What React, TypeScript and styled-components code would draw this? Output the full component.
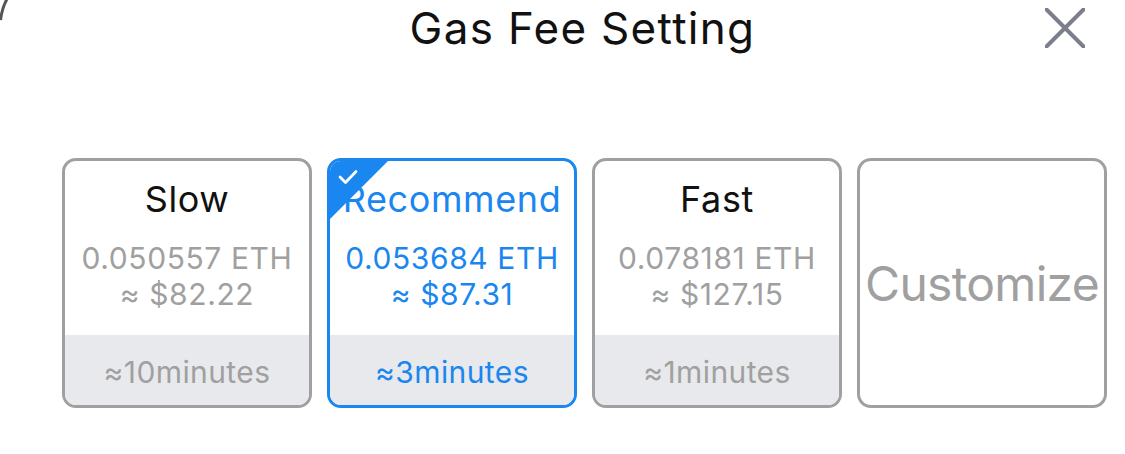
import React from "react";
import styled, { createGlobalStyle } from "styled-components";

const Global = createGlobalStyle`
  html, body { margin: 0; padding: 0; background: #ffffff; }
  body { font-family: Inter, "Noto Sans", "Liberation Sans", sans-serif; -webkit-font-smoothing: antialiased; }
`;

const Page = styled.div`
  position: relative;
  width: 1125px;
  height: 454px;
  overflow: hidden;
  background: #ffffff;
`;

const CornerArc = styled.svg`
  position: absolute;
  left: 0;
  top: 0;
`;

const Header = styled.header`
  display: grid;
  grid-template-columns: 1fr auto 1fr;
  align-items: center;
  height: 56px;
  padding: 0 40px 0 80px;
`;

const Title = styled.h1`
  grid-column: 2;
  margin: 0;
  font-size: 44px;
  font-weight: 400;
  color: #111111;
  letter-spacing: 1.3px;
  line-height: 56px;
`;

const Close = styled.button`
  grid-column: 3;
  justify-self: end;
  display: flex;
  align-items: center;
  justify-content: center;
  width: 40px;
  height: 40px;
  padding: 0;
  border: none;
  background: transparent;
`;

const Row = styled.div`
  display: flex;
  gap: 15px;
  padding-left: 62px;
  margin-top: 102px;
`;

const Card = styled.div<{ $active?: boolean }>`
  position: relative;
  box-sizing: border-box;
  width: 250px;
  height: 250px;
  border: 3px solid ${(p) => (p.$active ? "#1a86f0" : "#a0a0a0")};
  border-radius: 14px;
  overflow: hidden;
  display: flex;
  flex-direction: column;
  background: #ffffff;
`;

const Body = styled.div`
  flex: 1;
  display: flex;
  flex-direction: column;
  align-items: center;
  padding-top: 15.5px;
`;

const Name = styled.div<{ $active?: boolean }>`
  font-size: 36px;
  line-height: 44px;
  letter-spacing: 0.6px;
  color: ${(p) => (p.$active ? "#1a86f0" : "#111111")};
`;

const Values = styled.div`
  display: flex;
  flex-direction: column;
  align-items: center;
  margin-top: 19px;
`;

const Value = styled.div<{ $active?: boolean }>`
  font-size: 30px;
  line-height: 36px;
  letter-spacing: 0.6px;
  color: ${(p) => (p.$active ? "#1a86f0" : "#a0a0a0")};
  white-space: nowrap;
`;

const Footer = styled.div<{ $active?: boolean }>`
  height: 70px;
  background: #e8e9ec;
  display: flex;
  align-items: center;
  justify-content: center;
  padding-top: 4px;
  box-sizing: border-box;
  font-size: 30px;
  letter-spacing: 0.4px;
  color: ${(p) => (p.$active ? "#1a86f0" : "#a0a0a0")};
`;

const CustomCard = styled(Card)`
  align-items: center;
  justify-content: center;
`;

const CustomLabel = styled.div`
  font-size: 48px;
  color: #a0a0a0;
  letter-spacing: -0.7px;
`;

const Corner = styled.div`
  position: absolute;
  left: 0;
  top: 0;
  width: 58px;
  height: 58px;
  background: #1a86f0;
  clip-path: polygon(0 0, 100% 0, 0 100%);
`;

const Check = styled.svg`
  position: absolute;
  left: 8px;
  top: 8px;
`;

type Option = { name: string; eth: string; usd: string; time: string; active?: boolean };

const options: Option[] = [
  { name: "Slow", eth: "0.050557 ETH", usd: "≈ $82.22", time: "≈10minutes" },
  { name: "Recommend", eth: "0.053684 ETH", usd: "≈ $87.31", time: "≈3minutes", active: true },
  { name: "Fast", eth: "0.078181 ETH", usd: "≈ $127.15", time: "≈1minutes" },
];

export default function App() {
  return (
    <Page>
      <Global />
      <CornerArc width="12" height="22" viewBox="0 0 12 22">
        <path d="M7 -1 Q2 8 0.5 20" stroke="#555" strokeWidth="3" fill="none" />
      </CornerArc>
      <Header>
        <Title>Gas Fee Setting</Title>
        <Close aria-label="close">
          <svg width="40" height="40" viewBox="0 0 40 40">
            <path d="M1.5 1.5 L38.5 38.5 M38.5 1.5 L1.5 38.5" stroke="#7b7f8b" strokeWidth="4" strokeLinecap="round" />
          </svg>
        </Close>
      </Header>
      <Row>
        {options.map((o) => (
          <Card key={o.name} $active={o.active}>
            {o.active && (
              <Corner>
                <Check width="20" height="16" viewBox="0 0 20 16">
                  <path d="M2 8 L7.5 13.5 L18 2.5" stroke="#ffffff" strokeWidth="2.8" fill="none" strokeLinecap="round" strokeLinejoin="round" />
                </Check>
              </Corner>
            )}
            <Body>
              <Name $active={o.active}>{o.name}</Name>
              <Values>
                <Value $active={o.active}>{o.eth}</Value>
                <Value $active={o.active}>{o.usd}</Value>
              </Values>
            </Body>
            <Footer $active={o.active}>{o.time}</Footer>
          </Card>
        ))}
        <CustomCard>
          <CustomLabel>Customize</CustomLabel>
        </CustomCard>
      </Row>
    </Page>
  );
}
